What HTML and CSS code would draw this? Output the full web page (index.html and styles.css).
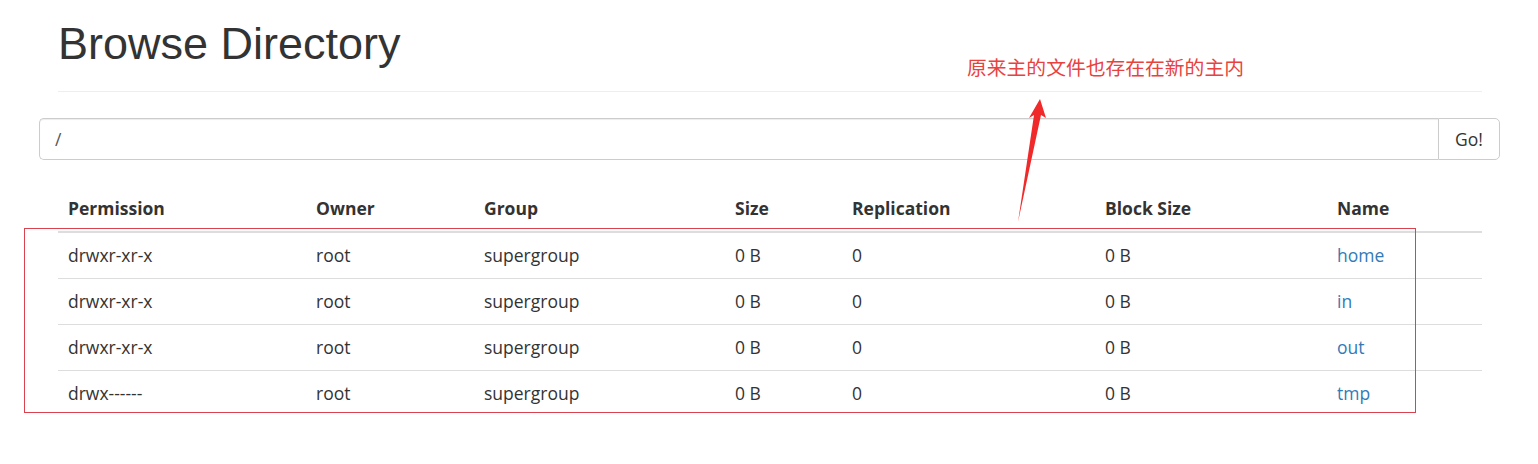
FILE: index.html
```html
<!DOCTYPE html>
<html lang="zh">
<head>
<meta charset="utf-8">
<title>Browse Directory</title>
<link rel="stylesheet" href="styles.css">
</head>
<body>
<div class="page">
  <div class="container">
    <div class="page-header">
      <h1>Browse Directory</h1>
    </div>
    <form class="input-group">
      <input class="form-control" type="text" value="/">
      <button class="btn" type="button">Go!</button>
    </form>
    <table class="table">
      <colgroup>
        <col style="width:248px">
        <col style="width:168px">
        <col style="width:251px">
        <col style="width:117px">
        <col style="width:253px">
        <col style="width:232px">
        <col style="width:155px">
      </colgroup>
      <thead>
        <tr><th>Permission</th><th>Owner</th><th>Group</th><th>Size</th><th>Replication</th><th>Block Size</th><th>Name</th></tr>
      </thead>
      <tbody>
        <tr><td>drwxr-xr-x</td><td>root</td><td>supergroup</td><td>0 B</td><td>0</td><td>0 B</td><td><a href="#">home</a></td></tr>
        <tr><td>drwxr-xr-x</td><td>root</td><td>supergroup</td><td>0 B</td><td>0</td><td>0 B</td><td><a href="#">in</a></td></tr>
        <tr><td>drwxr-xr-x</td><td>root</td><td>supergroup</td><td>0 B</td><td>0</td><td>0 B</td><td><a href="#">out</a></td></tr>
        <tr><td>drwx------</td><td>root</td><td>supergroup</td><td>0 B</td><td>0</td><td>0 B</td><td><a href="#">tmp</a></td></tr>
      </tbody>
    </table>
  </div>

  <div class="note">原来主的文件也存在在新的主内</div>
  <div class="highlight-box"></div>
  <svg class="arrow" width="1538" height="464" viewBox="0 0 1538 464">
    <polygon points="1040,99 1046,118 1041,115 1018,222 1034,115 1029,118" fill="#f02a2a"/>
  </svg>
</div>
</body>
</html>
```

FILE: styles.css
```css
html, body {
  margin: 0;
  padding: 0;
  background: #fff;
}

body {
  font-family: "Open Sans", "Noto Sans", "Noto Sans CJK SC", sans-serif;
  font-size: 17.5px;
  color: #333;
}

.page {
  position: relative;
  width: 1538px;
  height: 464px;
  overflow: hidden;
}

.container {
  margin-left: 58px;
  width: 1424px;
  padding-top: 19px;
}

.page-header {
  padding-bottom: 22px;
  border-bottom: 1px solid #eee;
}

.page-header h1 {
  margin: 0;
  font-family: "Liberation Sans", Arial, sans-serif;
  font-weight: 400;
  font-size: 45px;
  line-height: 50px;
  color: #333;
}

.input-group {
  display: flex;
  margin: 26px -18px 0 -19px;
  height: 42px;
}

.form-control {
  flex: 1;
  box-sizing: border-box;
  height: 42px;
  margin: 0;
  padding: 0 15px;
  border: 1px solid #ccc;
  border-right: none;
  border-radius: 5px 0 0 5px;
  font-family: inherit;
  font-size: 17.5px;
  color: #555;
  outline: none;
  box-shadow: inset 0 1px 1px rgba(0,0,0,0.075);
}

.btn {
  box-sizing: border-box;
  width: 62px;
  height: 42px;
  margin: 0;
  padding: 0;
  border: 1px solid #ccc;
  border-radius: 0 5px 5px 0;
  background: #fff;
  font-family: inherit;
  font-size: 17.5px;
  color: #333;
}

.table {
  margin-top: 26px;
  width: 1424px;
  border-collapse: collapse;
  table-layout: fixed;
}

.table th,
.table td {
  padding: 10px 10px;
  line-height: 25px;
  text-align: left;
  white-space: nowrap;
}

.table th {
  font-weight: 700;
  border-bottom: 2.5px solid #ddd;
}

.table td {
  border-top: 1px solid #ddd;
}

.table tbody tr:first-child td {
  border-top: none;
}

.table a {
  color: #337ab7;
  text-decoration: none;
}

.note {
  position: absolute;
  left: 967px;
  top: 54px;
  font-family: "Noto Sans CJK SC", sans-serif;
  font-size: 19.8px;
  line-height: 26px;
  color: #e8423f;
  white-space: nowrap;
}

.highlight-box {
  position: absolute;
  left: 24px;
  top: 228px;
  width: 1390px;
  height: 183px;
  border: 1px solid #d8434f;
}

.arrow {
  position: absolute;
  left: 0;
  top: 0;
  pointer-events: none;
}
```
